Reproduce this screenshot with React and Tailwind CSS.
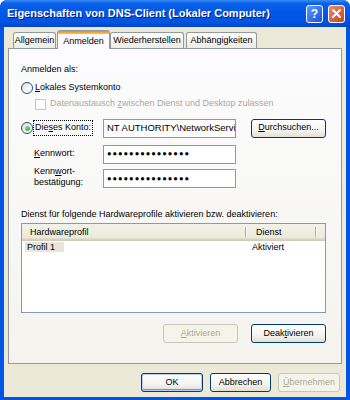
import React from "react";

const U = ({ children }) => <span className="underline underline-offset-[1px]">{children}</span>;

function Btn({ children, w, disabled, isDefault }) {
  return (
    <div
      className={`h-[19px] ${w} shrink-0 flex items-center justify-center rounded-[3px] border text-[9px] ${
        disabled
          ? "border-[#C9C7BA] text-[#ACA899] bg-[#F5F4EA]"
          : "border-[#003C74] text-black bg-[linear-gradient(to_bottom,#FFFFFF_0%,#F4F3EE_60%,#E3DFD3_100%)]"
      } ${isDefault ? "shadow-[inset_0_0_0_1px_#B8D0F9,inset_0_-1px_0_1px_#6F93E6]" : ""}`}
    >
      {children}
    </div>
  );
}

function Radio({ checked }) {
  return (
    <div className="w-[12px] h-[12px] shrink-0 rounded-full border border-[#1C5180] bg-[linear-gradient(135deg,#DCD9CF_0%,#FFFFFF_70%)] flex items-center justify-center">
      {checked && <div className="w-[5px] h-[5px] rounded-full bg-[radial-gradient(circle_at_35%_35%,#7DE07A,#21A121)]" />}
    </div>
  );
}

function Input({ children }) {
  return (
    <div className="h-[19px] w-[133px] shrink-0 border border-[#7F9DB9] bg-white flex items-center pl-[3px] overflow-hidden whitespace-nowrap text-[9.5px]">
      {children}
    </div>
  );
}

const Dots = () => (
  <span className="text-[7.5px] tracking-[1px] leading-none">●●●●●●●●●●●●●●●</span>
);

function Tab({ label, w, active }) {
  if (active)
    return (
      <div className={`${w} h-[19px] -mb-[1px] z-10 relative rounded-t-[3px] border border-b-0 border-[#919B9C] bg-[#FCFCFE] overflow-hidden flex flex-col`}>
        <div className="h-[3px] bg-[linear-gradient(to_bottom,#E68B2C,#FFC73C)]" />
        <div className="flex-1 flex items-center justify-center text-[9px]">{label}</div>
      </div>
    );
  return (
    <div className={`${w} h-[16px] rounded-t-[3px] border border-b-0 border-[#919B9C] bg-[linear-gradient(to_bottom,#FFFFFF,#ECEBE6)] flex items-center justify-center text-[9px]`}>
      {label}
    </div>
  );
}

export default function App() {
  return (
    <div
      className="w-[350px] h-[400px] flex flex-col rounded-t-[7px] overflow-hidden bg-[#0055E5] text-black"
      style={{ fontFamily: '"Liberation Sans", Arial, sans-serif' }}
    >
      {/* title bar */}
      <div className="h-[27px] shrink-0 flex items-center pl-[7px] pr-[5px] bg-[linear-gradient(to_bottom,#3A8CF6_0%,#0C61EA_12%,#0058E6_45%,#0055E3_80%,#0046C8_100%)]">
        <span className="text-white font-bold text-[11px] [text-shadow:1px_1px_#0A1883] whitespace-nowrap">
          Eigenschaften von DNS-Client (Lokaler Computer)
        </span>
        <div className="ml-auto flex gap-[5px]">
          <div className="w-[17px] h-[18px] rounded-[3px] border border-white bg-[linear-gradient(135deg,#5B9BFF,#1552E0)] flex items-center justify-center text-white font-bold text-[12px] leading-none">
            ?
          </div>
          <div className="w-[17px] h-[18px] rounded-[3px] border border-white bg-[linear-gradient(135deg,#EE8A68,#CC4220)] flex items-center justify-center">
            <svg width="9" height="9" viewBox="0 0 9 9">
              <path d="M1 1 L8 8 M8 1 L1 8" stroke="white" strokeWidth="2" strokeLinecap="round" />
            </svg>
          </div>
        </div>
      </div>

      {/* body */}
      <div className="flex-1 mx-[4px] mb-[3px] bg-[#ECE9D8] flex flex-col">
        <div className="h-[18px] mt-[3px] flex items-end pl-[9px]">
          <Tab label="Allgemein" w="w-[43px]" />
          <div className="w-[1px]" />
          <Tab label="Anmelden" w="w-[53px]" active />
          <Tab label="Wiederherstellen" w="w-[74px]" />
          <div className="w-[2px]" />
          <Tab label="Abhängigkeiten" w="w-[71px]" />
        </div>

        {/* panel */}
        <div className="ml-[4px] w-[334px] h-[316px] border border-[#919B9C] bg-[linear-gradient(to_bottom,#FCFCFE,#F4F3EE)] pl-[12px] pr-[15px] pt-[15px] flex flex-col text-[9px]">
          <div className="h-[12px] flex items-center">Anmelden als:</div>

          <div className="h-[12px] mt-[6px] flex items-center">
            <Radio />
            <span className="ml-[1px] pl-[1px]"><U>L</U>okales Systemkonto</span>
          </div>

          <div className="h-[12px] mt-[4px] flex items-center pl-[14px] text-[#ACA899]">
            <div className="w-[11px] h-[11px] border border-[#CAC8BB] bg-white mr-[4px]" />
            <span>Datenaustausch <U>z</U>wischen Dienst und Desktop zulassen</span>
          </div>

          <div className="h-[20px] mt-[8px] flex items-center">
            <div className="w-[82px] shrink-0 flex items-center">
              <Radio checked />
              <span className="ml-[1px] px-[1px] outline outline-1 outline-dotted outline-black">
                Die<U>s</U>es Konto:
              </span>
            </div>
            <Input>NT AUTHORITY\NetworkServi</Input>
            <div className="ml-auto">
              <Btn w="w-[75px]"><span><U>D</U>urchsuchen...</span></Btn>
            </div>
          </div>

          <div className="h-[20px] mt-[6px] flex items-center pl-[13px]">
            <span className="w-[69px] shrink-0"><U>K</U>ennwort:</span>
            <Input><Dots /></Input>
          </div>

          <div className="h-[22px] mt-[2px] flex items-start pl-[13px]">
            <span className="w-[69px] shrink-0 leading-[11px]">
              Kenn<U>w</U>ort-
              <br />
              bestätigung:
            </span>
            <div className="mt-[3px]">
              <Input><Dots /></Input>
            </div>
          </div>

          <div className="h-[12px] mt-[21px] flex items-center">
            Dienst für folgende Hardwareprofile aktivieren bzw. deaktivieren:
          </div>

          {/* list view */}
          <div className="mt-[2px] h-[90px] border border-[#7F9DB9] bg-white flex flex-col">
            <div className="h-[17px] flex bg-[linear-gradient(to_bottom,#F3F2EA_0%,#EBEADB_80%,#E2DECD_85%,#D6D2C2_92%,#CBC7B8_100%)]">
              <div className="w-[225px] flex items-center pl-[8px] relative">
                Hardwareprofil
                <div className="absolute right-0 top-[3px] bottom-[4px] w-[2px] border-l border-r border-l-[#ACA899] border-r-white" />
              </div>
              <div className="w-[70px] flex items-center pl-[9px] relative">
                Dienst
                <div className="absolute right-0 top-[3px] bottom-[4px] w-[2px] border-l border-r border-l-[#ACA899] border-r-white" />
              </div>
            </div>
            <div className="h-[10px] mt-[2px] flex items-center">
              <div className="w-[225px] pl-[3px]">
                <span className="bg-[#E8E6DA] pl-[2px] pr-[9px] inline-block leading-[10px]">Profil 1</span>
              </div>
              <div className="pl-[5px]">Aktiviert</div>
            </div>
          </div>

          <div className="mt-[11px] flex justify-end gap-[13px]">
            <Btn w="w-[75px]" disabled><span><U>A</U>ktivieren</span></Btn>
            <Btn w="w-[75px]"><span>Deak<U>t</U>ivieren</span></Btn>
          </div>
        </div>

        <div className="mt-[9px] flex justify-end gap-[7px] pr-[6px]">
          <Btn w="w-[62px]" isDefault>OK</Btn>
          <Btn w="w-[61px]">Abbrechen</Btn>
          <Btn w="w-[62px]" disabled><span><U>Ü</U>bernehmen</span></Btn>
        </div>
      </div>
    </div>
  );
}
